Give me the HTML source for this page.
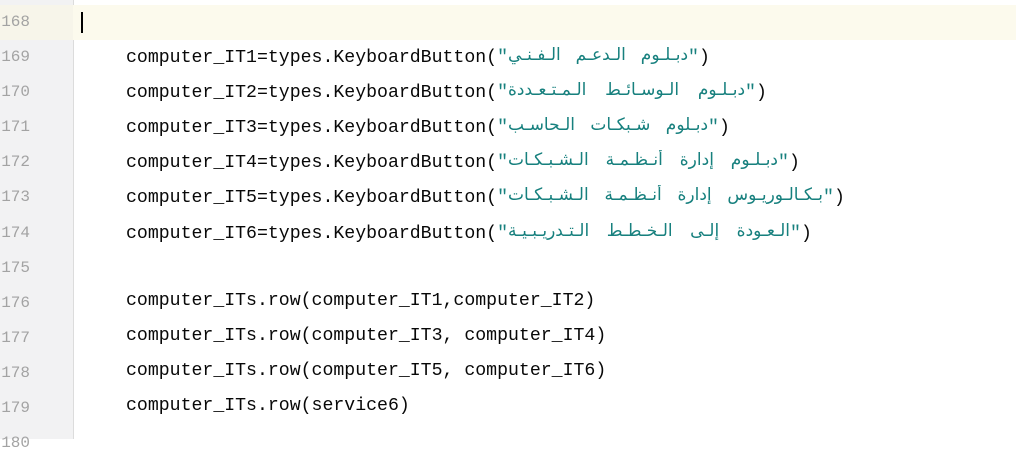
<!DOCTYPE html>
<html><head><meta charset="utf-8"><style>
html,body{margin:0;padding:0;width:1016px;height:439px;overflow:hidden;background:#fff;}
.g{position:absolute;left:0;top:0;width:73px;height:439px;background:#f2f2f3;border-right:1px solid #dcdcdc;}
.hl{position:absolute;left:0;top:5px;width:1016px;height:35px;background:#fcfaed;}
.hlg{position:absolute;left:0;top:5px;width:73px;height:35px;background:#f7f5ea;}
.ln{position:absolute;left:0;width:30px;font:16px "Liberation Mono","DejaVu Sans Mono",monospace;color:#a3a3a3;text-align:right;}
.c{position:absolute;left:126px;font:18.2px "Liberation Mono","DejaVu Sans Mono",monospace;color:#080808;white-space:pre;}
.s{color:#17807e;}
.ar{display:inline-block;direction:rtl;text-align:justify;text-align-last:justify;white-space:normal;overflow:hidden;height:22px;font-family:"DejaVu Sans",sans-serif;font-size:17px;color:#17807e;vertical-align:-5px;}
.caret{position:absolute;left:81px;top:12px;width:2px;height:21px;background:#000;}
</style></head><body>
<div class="g"></div>
<div class="hl"></div>
<div class="hlg"></div>
<div class="caret"></div>
<div class="ln" style="top:13px">168</div>
<div class="ln" style="top:48px">169</div>
<div class="ln" style="top:83px">170</div>
<div class="ln" style="top:118px">171</div>
<div class="ln" style="top:153px">172</div>
<div class="ln" style="top:188px">173</div>
<div class="ln" style="top:224px">174</div>
<div class="ln" style="top:259px">175</div>
<div class="ln" style="top:294px">176</div>
<div class="ln" style="top:329px">177</div>
<div class="ln" style="top:364px">178</div>
<div class="ln" style="top:399px">179</div>
<div class="ln" style="top:434px">180</div>

<div class="c" style="top:45px">computer_IT1=types.KeyboardButton(<span class="s">"<span class="ar" style="width:180px">دبـلـوم الـدعـم الـفـنـي</span>"</span>)</div>
<div class="c" style="top:80px">computer_IT2=types.KeyboardButton(<span class="s">"<span class="ar" style="width:237px">دبـلـوم الـوسـائـط الـمـتـعـددة</span>"</span>)</div>
<div class="c" style="top:115px">computer_IT3=types.KeyboardButton(<span class="s">"<span class="ar" style="width:200px">دبـلوم شـبكـات الـحاسـب</span>"</span>)</div>
<div class="c" style="top:150px">computer_IT4=types.KeyboardButton(<span class="s">"<span class="ar" style="width:270px">دبـلـوم إدارة أنـظـمـة الـشـبـكـات</span>"</span>)</div>
<div class="c" style="top:185px">computer_IT5=types.KeyboardButton(<span class="s">"<span class="ar" style="width:315px">بـكـالـوريـوس إدارة أنـظـمـة الـشـبـكـات</span>"</span>)</div>
<div class="c" style="top:221px">computer_IT6=types.KeyboardButton(<span class="s">"<span class="ar" style="width:282px">الـعـودة إلـى الـخـطـط الـتـدريـبـيـة</span>"</span>)</div>
<div class="c" style="top:291px">computer_ITs.row(computer_IT1,computer_IT2)</div>
<div class="c" style="top:326px">computer_ITs.row(computer_IT3, computer_IT4)</div>
<div class="c" style="top:361px">computer_ITs.row(computer_IT5, computer_IT6)</div>
<div class="c" style="top:396px">computer_ITs.row(service6)</div>
</body></html>
